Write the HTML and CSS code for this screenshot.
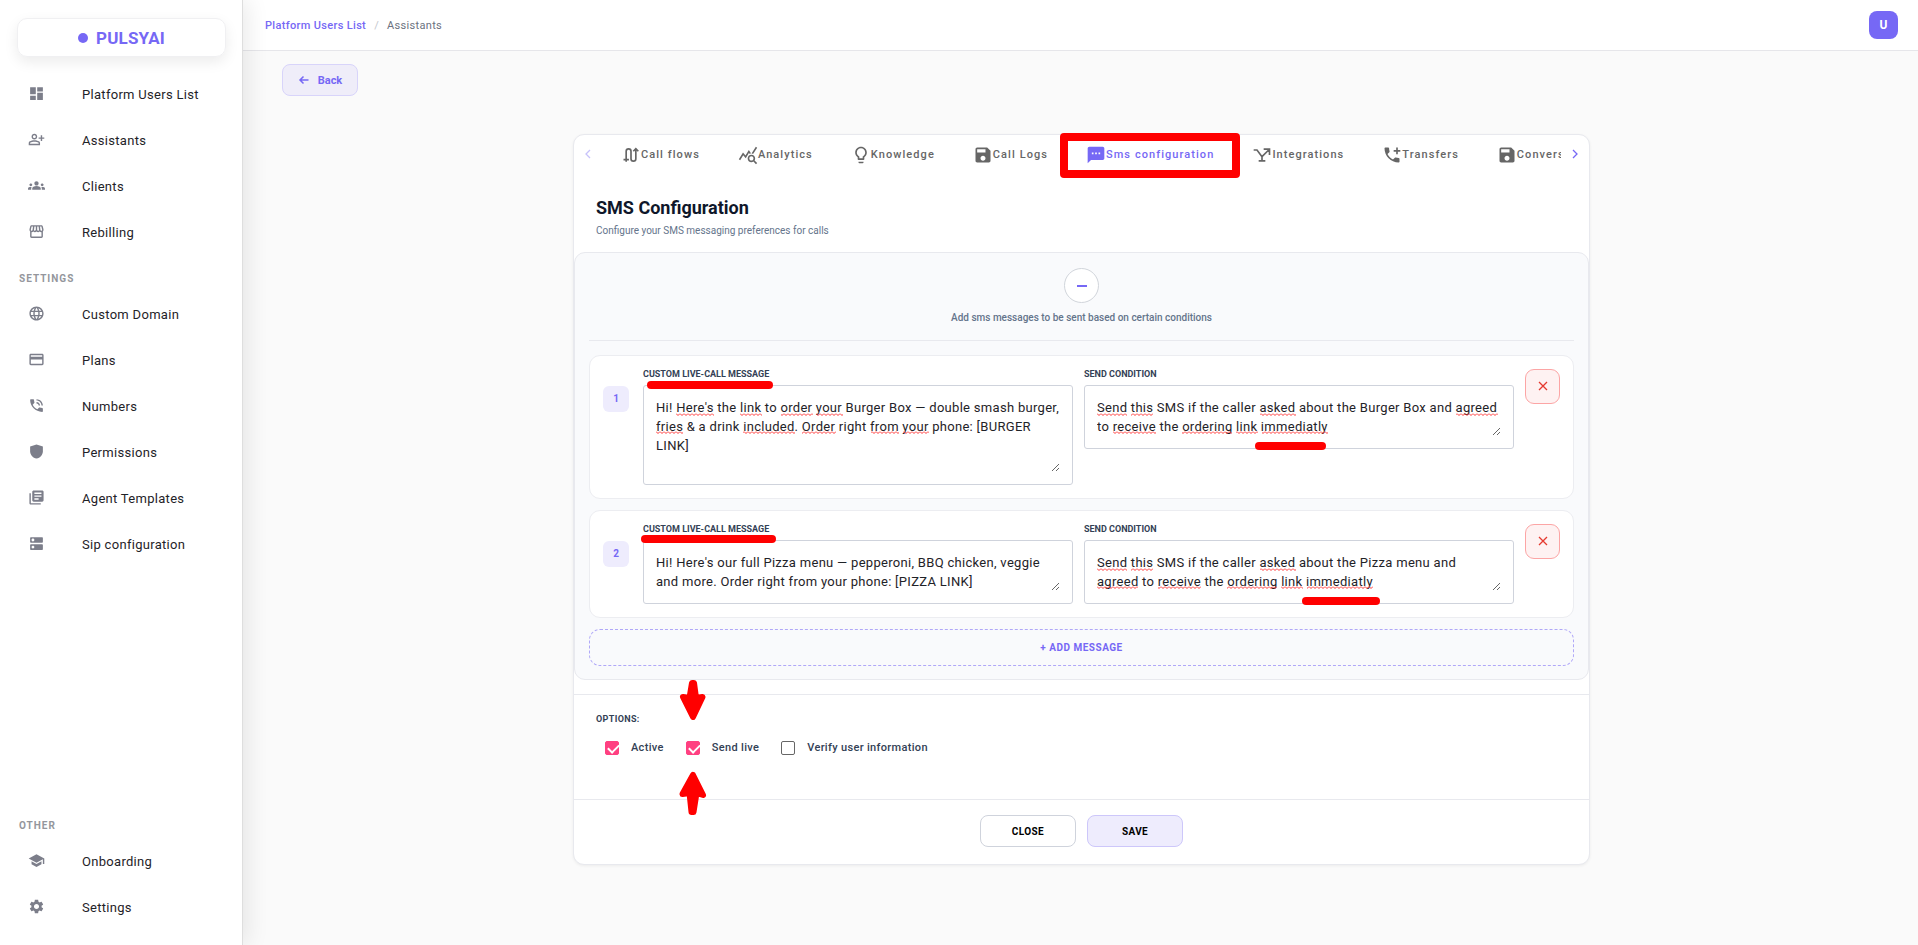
FILE: index.html
```html
<!DOCTYPE html>
<html lang="en">
<head>
  <meta charset="UTF-8" />
  <meta name="viewport" content="width=device-width, initial-scale=1.0" />
  <title>PulsyAI - SMS Configuration</title>
  <link rel="stylesheet" href="styles.css">
</head>
<body>
  <aside class="sidebar">
    <div class="logo"><span class="logo-dot"></span>PULSYAI</div>
    <nav class="nav">
      <a class="nav-item" href="#"><svg class="nav-icon" viewBox="0 0 24 24"><path d="M3 13h8V3H3v10zm0 8h8v-6H3v6zm10 0h8V11h-8v10zm0-18v6h8V3h-8z"/></svg>Platform Users List</a>
      <a class="nav-item" href="#"><svg class="nav-icon" viewBox="0 0 24 24"><path d="M20 9V6h-2v3h-3v2h3v3h2v-3h3V9h-3zM9 12c2.21 0 4-1.79 4-4s-1.79-4-4-4-4 1.79-4 4 1.79 4 4 4zm0-6c1.1 0 2 .9 2 2s-.9 2-2 2-2-.9-2-2 .9-2 2-2zm6.39 8.56C13.71 13.7 11.53 13 9 13s-4.71.7-6.39 1.56C1.61 15.07 1 16.1 1 17.22V20h16v-2.78c0-1.12-.61-2.15-1.61-2.66zM15 18H3v-.78c0-.38.2-.72.52-.88C4.71 15.73 6.63 15 9 15c2.37 0 4.29.73 5.48 1.34.32.16.52.5.52.88V18z"/></svg>Assistants</a>
      <a class="nav-item" href="#"><svg class="nav-icon" viewBox="0 0 24 24"><path d="M12 12.75c1.63 0 3.07.39 4.24.9 1.08.48 1.76 1.56 1.76 2.73V18H6v-1.61c0-1.18.68-2.26 1.76-2.73 1.17-.52 2.61-.91 4.24-.91zM4 13c1.1 0 2-.9 2-2s-.9-2-2-2-2 .9-2 2 .9 2 2 2zm1.13 1.1c-.37-.06-.74-.1-1.13-.1-.99 0-1.93.21-2.78.58C.48 14.9 0 15.62 0 16.43V18h4.5v-1.61c0-.83.23-1.61.63-2.29zM20 13c1.1 0 2-.9 2-2s-.9-2-2-2-2 .9-2 2 .9 2 2 2zm4 3.43c0-.81-.48-1.53-1.22-1.85-.85-.37-1.79-.58-2.78-.58-.39 0-.76.04-1.13.1.4.68.63 1.46.63 2.29V18H24v-1.57zM12 6c1.66 0 3 1.34 3 3s-1.34 3-3 3-3-1.34-3-3 1.34-3 3-3z"/></svg>Clients</a>
      <a class="nav-item" href="#"><svg class="nav-icon" viewBox="0 0 24 24"><path d="M21.9 8.89l-1.05-4.37c-.22-.9-1-1.52-1.91-1.52H5.05c-.9 0-1.69.63-1.9 1.52L2.1 8.89c-.24 1.02-.02 2.06.62 2.88.08.11.19.19.28.29V19c0 1.1.9 2 2 2h14c1.1 0 2-.9 2-2v-6.94c.09-.09.2-.18.28-.28.64-.82.87-1.87.62-2.89zm-2.99-3.9l1.05 4.37c.1.42.01.84-.25 1.17-.14.18-.44.47-.94.47-.61 0-1.14-.49-1.21-1.14L16.98 5l1.93-.01zM13 5h1.96l.54 4.52c.05.39-.07.78-.33 1.07-.22.26-.54.41-.95.41-.67 0-1.22-.59-1.22-1.31V5zM8.49 9.52L9.04 5H11v4.69c0 .72-.55 1.31-1.29 1.31-.34 0-.65-.15-.89-.41-.25-.29-.37-.68-.33-1.07zm-4.45-.16L5.05 5h1.97l-.58 4.86c-.08.65-.6 1.14-1.21 1.14-.49 0-.8-.29-.93-.47-.27-.32-.36-.75-.26-1.17zM5 19v-6.03c.08.01.15.03.23.03.87 0 1.66-.36 2.24-.95.6.6 1.4.95 2.31.95.87 0 1.65-.36 2.23-.93.59.57 1.39.93 2.29.93.84 0 1.64-.35 2.24-.95.58.59 1.37.95 2.24.95.08 0 .15-.02.23-.03V19H5z"/></svg>Rebilling</a>
      <div class="nav-label">SETTINGS</div>
      <a class="nav-item" href="#"><svg class="nav-icon" viewBox="0 0 24 24"><path d="M11.99 2C6.47 2 2 6.48 2 12s4.47 10 9.99 10C17.52 22 22 17.52 22 12S17.52 2 11.99 2zm6.93 6h-2.95c-.32-1.25-.78-2.45-1.38-3.56 1.84.63 3.37 1.91 4.33 3.56zM12 4.04c.83 1.2 1.48 2.53 1.91 3.96h-3.82c.43-1.43 1.08-2.76 1.91-3.96zM4.26 14C4.1 13.36 4 12.69 4 12s.1-1.36.26-2h3.38c-.08.66-.14 1.32-.14 2 0 .68.06 1.34.14 2H4.26zm.82 2h2.95c.32 1.25.78 2.45 1.38 3.56-1.84-.63-3.37-1.9-4.33-3.56zm2.95-8H5.08c.96-1.66 2.49-2.93 4.33-3.56C8.81 5.55 8.35 6.75 8.03 8zM12 19.96c-.83-1.2-1.48-2.53-1.91-3.96h3.82c-.43 1.43-1.08 2.76-1.91 3.96zM14.34 14H9.66c-.09-.66-.16-1.32-.16-2 0-.68.07-1.35.16-2h4.68c.09.65.16 1.32.16 2 0 .68-.07 1.34-.16 2zm.25 5.56c.6-1.11 1.06-2.31 1.38-3.56h2.95c-.96 1.65-2.49 2.93-4.33 3.56zM16.36 14c.08-.66.14-1.32.14-2 0-.68-.06-1.34-.14-2h3.38c.16.64.26 1.31.26 2s-.1 1.36-.26 2h-3.38z"/></svg>Custom Domain</a>
      <a class="nav-item" href="#"><svg class="nav-icon" viewBox="0 0 24 24"><path d="M20 4H4c-1.11 0-1.99.89-1.99 2L2 18c0 1.11.89 2 2 2h16c1.11 0 2-.89 2-2V6c0-1.11-.89-2-2-2zm0 14H4v-6h16v6zm0-10H4V6h16v2z"/></svg>Plans</a>
      <a class="nav-item" href="#"><svg class="nav-icon" viewBox="0 0 24 24"><path d="M20 15.5c-1.25 0-2.45-.2-3.57-.57-.35-.11-.74-.03-1.02.24l-2.2 2.2c-2.83-1.44-5.15-3.75-6.59-6.59l2.2-2.21c.28-.26.36-.65.25-1C8.7 6.45 8.5 5.25 8.5 4c0-.55-.45-1-1-1H4c-.55 0-1 .45-1 1 0 9.39 7.61 17 17 17 .55 0 1-.45 1-1v-3.5c0-.55-.45-1-1-1zM19 12h2c0-4.97-4.03-9-9-9v2c3.87 0 7 3.13 7 7zm-4 0h2c0-2.76-2.24-5-5-5v2c1.66 0 3 1.34 3 3z"/></svg>Numbers</a>
      <a class="nav-item" href="#"><svg class="nav-icon" viewBox="0 0 24 24"><path d="M12 2L3 5v6.500c0 5 3.840 9.300 9 10.500 5.160-1.200 9-5.500 9-10.500V5l-9-3z"/></svg>Permissions</a>
      <a class="nav-item" href="#"><svg class="nav-icon" viewBox="0 0 24 24"><path d="M4 6H2v14c0 1.100.9 2 2 2h14v-2H4V6zm16-4H8c-1.100 0-2 .9-2 2v12c0 1.100.9 2 2 2h12c1.100 0 2-.9 2-2V4c0-1.100-.9-2-2-2zm-1 9H9V9h10v2zm-4 4H9v-2h6v2zm4-8H9V5h10v2z"/></svg>Agent Templates</a>
      <a class="nav-item" href="#"><svg class="nav-icon" viewBox="0 0 24 24"><path d="M20 13H4c-.55 0-1 .45-1 1v6c0 .55.45 1 1 1h16c.55 0 1-.45 1-1v-6c0-.55-.45-1-1-1zM7 19c-1.100 0-2-.9-2-2s.9-2 2-2 2 .9 2 2-.9 2-2 2zM20 3H4c-.55 0-1 .45-1 1v6c0 .55.45 1 1 1h16c.55 0 1-.45 1-1V4c0-.55-.45-1-1-1zM7 9c-1.100 0-2-.9-2-2s.9-2 2-2 2 .9 2 2-.9 2-2 2z"/></svg>Sip configuration</a>
    </nav>
    <nav class="nav nav-bottom">
      <div class="nav-label">OTHER</div>
      <a class="nav-item" href="#"><svg class="nav-icon" viewBox="0 0 24 24"><path d="M5 13.180v4L12 21l7-3.820v-4L12 17l-7-3.820zM12 3L1 9l11 6 9-4.910V17h2V9L12 3z"/></svg>Onboarding</a>
      <a class="nav-item" href="#"><svg class="nav-icon" viewBox="0 0 24 24"><path d="M19.140 12.940c.04-.3.060-.61.060-.94 0-.32-.02-.64-.07-.94l2.030-1.580c.18-.14.230-.41.120-.61l-1.920-3.320c-.12-.22-.37-.29-.59-.22l-2.390.96c-.5-.38-1.030-.7-1.620-.94l-.36-2.540c-.04-.24-.24-.41-.48-.41h-3.840c-.24 0-.43.170-.47.410l-.36 2.540c-.59.240-1.130.570-1.620.940l-2.390-.96c-.22-.08-.47 0-.59.220L2.740 8.870c-.12.210-.08.470.120.610l2.030 1.580c-.05.300-.09.630-.09.940s.02.640.070.940l-2.030 1.580c-.18.140-.23.410-.12.610l1.920 3.320c.12.220.37.290.59.220l2.390-.96c.5.380 1.030.7 1.620.940l.36 2.540c.05.240.24.410.48.410h3.840c.24 0 .44-.17.470-.41l.36-2.540c.59-.24 1.130-.56 1.620-.94l2.390.96c.22.080.47 0 .59-.22l1.920-3.320c.12-.22.070-.47-.12-.61l-2.010-1.580zM12 15.600c-1.980 0-3.600-1.620-3.600-3.600s1.620-3.600 3.600-3.600 3.600 1.620 3.600 3.600-1.620 3.600-3.600 3.600z"/></svg>Settings</a>
    </nav>
  </aside>

  <div class="page">
    <header class="topbar">
      <nav class="breadcrumb">
        <a class="crumb-link" href="#">Platform Users List</a>
        <span class="crumb-sep">/</span>
        <span>Assistants</span>
      </nav>
      <button class="avatar" type="button">U</button>
    </header>

    <main class="content">
      <button class="back-btn" type="button"><svg class="back-icon" viewBox="0 0 24 24"><path d="M21 12H4M11 5l-7 7 7 7"/></svg>Back</button>

      <section class="card">
        <div class="tabs">
          <button class="tabs-arrow faded" type="button" aria-label="Previous tabs"><svg viewBox="0 0 6 10"><path d="M5 1L1 5l4 4"/></svg></button>
          <div class="tab-list">
            <button class="tab" type="button"><svg class="tab-icon" viewBox="0 0 24 24"><path class="line" d="M3 17.500h6.500M6.200 20V7.500a2.900 2.900 0 0 1 5.800 0v9a2.900 2.900 0 0 0 5.800 0V5M14.800 7.500l3-3 3 3"/></svg>Call flows</button>
            <button class="tab" type="button"><svg class="tab-icon" viewBox="0 0 24 24"><path d="M19.880 18.470c.44-.7.7-1.510.7-2.390 0-2.490-2.010-4.500-4.500-4.500s-4.500 2.010-4.500 4.500 2.010 4.500 4.490 4.500c.88 0 1.700-.26 2.390-.7L21.580 23 23 21.580l-3.120-3.110zm-3.800.110c-1.380 0-2.500-1.120-2.500-2.500s1.120-2.500 2.500-2.500 2.500 1.120 2.500 2.500-1.120 2.500-2.500 2.500zm-.36-8.500c-.74.020-1.450.180-2.100.450l-.55-.83-3.800 6.180-3.010-3.520-3.630 5.810L1 17l5-8 3 3.500L13 6l2.720 4.080zm2.590.5c-.64-.28-1.330-.45-2.050-.49L21.380 2 23 3.180l-4.690 7.400z"/></svg>Analytics</button>
            <button class="tab" type="button"><svg class="tab-icon" viewBox="0 0 24 24"><path d="M9 21c0 .55.45 1 1 1h4c.55 0 1-.45 1-1v-1H9v1zm3-19C8.140 2 5 5.140 5 9c0 2.380 1.190 4.470 3 5.740V17c0 .55.45 1 1 1h6c.55 0 1-.45 1-1v-2.260c1.810-1.270 3-3.360 3-5.740 0-3.860-3.140-7-7-7zm2.850 11.100l-.85.600V16h-4v-2.300l-.85-.6C7.800 12.160 7 10.630 7 9c0-2.760 2.240-5 5-5s5 2.240 5 5c0 1.630-.8 3.160-2.150 4.100z"/></svg>Knowledge</button>
            <button class="tab" type="button"><svg class="tab-icon" viewBox="0 0 24 24"><path d="M17 3H5c-1.110 0-2 .9-2 2v14c0 1.100.89 2 2 2h14c1.100 0 2-.9 2-2V7l-4-4zm-5 16c-1.660 0-3-1.340-3-3s1.340-3 3-3 3 1.340 3 3-1.340 3-3 3zm3-10H5V5h10v4z"/></svg>Call Logs</button>
            <button class="tab active" type="button"><svg class="tab-icon" viewBox="0 0 24 24"><path d="M20 2H4c-1.100 0-1.990.9-1.990 2L2 22l4-4h14c1.100 0 2-.9 2-2V4c0-1.100-.9-2-2-2zM9 11H7V9h2v2zm4 0h-2V9h2v2zm4 0h-2V9h2v2z"/></svg>Sms configuration</button>
            <button class="tab" type="button"><svg class="tab-icon" viewBox="0 0 24 24"><path class="line" d="M2 6h4l6 8M12 14l8-8M14 5h7v7M12 13v6M8 19h8"/></svg>Integrations</button>
            <button class="tab" type="button"><svg class="tab-icon" viewBox="0 0 24 24"><path d="M20 15.500c-1.250 0-2.450-.2-3.570-.57-.1-.03-.21-.05-.31-.05-.26 0-.51.1-.71.290l-2.200 2.200c-2.830-1.440-5.150-3.750-6.590-6.590l2.200-2.210c.28-.26.360-.65.250-1C8.700 6.450 8.500 5.250 8.500 4c0-.55-.45-1-1-1H4c-.55 0-1 .45-1 1 0 9.390 7.610 17 17 17 .55 0 1-.45 1-1v-3.500c0-.55-.45-1-1-1zM22 6h-3V3h-2v3h-3v2h3v3h2V8h3z"/></svg>Transfers</button>
            <button class="tab" type="button"><svg class="tab-icon" viewBox="0 0 24 24"><path d="M17 3H5c-1.110 0-2 .9-2 2v14c0 1.100.89 2 2 2h14c1.100 0 2-.9 2-2V7l-4-4zm-5 16c-1.660 0-3-1.340-3-3s1.340-3 3-3 3 1.340 3 3-1.340 3-3 3zm3-10H5V5h10v4z"/></svg>Conversations</button>
          </div>
          <button class="tabs-arrow" type="button" aria-label="Next tabs"><svg viewBox="0 0 6 10"><path d="M1 1l4 4-4 4"/></svg></button>
        </div>

        <div class="card-head">
          <h1>SMS Configuration</h1>
          <p>Configure your SMS messaging preferences for calls</p>
        </div>

        <div class="panel">
          <div class="panel-head">
            <button class="toggle-btn" type="button" aria-label="Collapse"></button>
            <p>Add sms messages to be sent based on certain conditions</p>
          </div>

          <div class="message">
            <span class="badge">1</span>
            <div class="field">
              <label for="msg1">CUSTOM LIVE-CALL MESSAGE</label>
              <div class="box">
                <textarea class="tall" id="msg1" spellcheck="false">Hi! Here's the link to order your Burger Box — double smash burger, fries &amp; a drink included. Order right from your phone: [BURGER LINK]</textarea>
                <svg class="spell">
                  <defs><pattern id="wave" width="4" height="3" patternUnits="userSpaceOnUse"><path d="M0 .5l2 2 2-2" fill="none" stroke="#f33"/></pattern></defs>
                  <rect x="20" y="15" width="38" height="3"/><rect x="84" y="15" width="22" height="3"/><rect x="125" y="15" width="32" height="3"/><rect x="160" y="15" width="27" height="3"/>
                  <rect x="0" y="33" width="27" height="3"/><rect x="87" y="33" width="52" height="3"/><rect x="146" y="33" width="34" height="3"/><rect x="215" y="33" width="28" height="3"/><rect x="247" y="33" width="26" height="3"/>
                </svg>
              </div>
            </div>
            <div class="field">
              <label for="cond1">SEND CONDITION</label>
              <div class="box">
                <textarea id="cond1" spellcheck="false">Send this SMS if the caller asked about the Burger Box and agreed to receive the ordering link immediatly</textarea>
                <svg class="spell">
                  <rect x="0" y="15" width="30" height="3"/><rect x="34" y="15" width="22" height="3"/><rect x="163" y="15" width="36" height="3"/><rect x="359" y="15" width="42" height="3"/>
                  <rect x="16" y="33" width="43" height="3"/><rect x="85" y="33" width="50" height="3"/><rect x="139" y="33" width="22" height="3"/><rect x="165" y="33" width="66" height="3"/>
                </svg>
              </div>
            </div>
            <button class="delete-btn" type="button" aria-label="Remove message 1"><svg viewBox="0 0 10 10"><path d="M1 1l8 8M9 1L1 9"/></svg></button>
          </div>

          <div class="message">
            <span class="badge">2</span>
            <div class="field">
              <label for="msg2">CUSTOM LIVE-CALL MESSAGE</label>
              <div class="box">
                <textarea id="msg2" spellcheck="false">Hi! Here's our full Pizza menu — pepperoni, BBQ chicken, veggie and more. Order right from your phone: [PIZZA LINK]</textarea>
              </div>
            </div>
            <div class="field">
              <label for="cond2">SEND CONDITION</label>
              <div class="box">
                <textarea id="cond2" spellcheck="false">Send this SMS if the caller asked about the Pizza menu and agreed to receive the ordering link immediatly</textarea>
                <svg class="spell">
                  <rect x="0" y="15" width="30" height="3"/><rect x="34" y="15" width="22" height="3"/><rect x="163" y="15" width="36" height="3"/>
                  <rect x="0" y="33" width="41" height="3"/><rect x="61" y="33" width="43" height="3"/><rect x="130" y="33" width="50" height="3"/><rect x="184" y="33" width="22" height="3"/><rect x="210" y="33" width="66" height="3"/>
                </svg>
              </div>
            </div>
            <button class="delete-btn" type="button" aria-label="Remove message 2"><svg viewBox="0 0 10 10"><path d="M1 1l8 8M9 1L1 9"/></svg></button>
          </div>

          <button class="add-btn" type="button">+ ADD MESSAGE</button>
        </div>

        <div class="options">
          <h2>OPTIONS:</h2>
          <div class="checks">
            <label class="check"><input type="checkbox" checked>Active</label>
            <label class="check"><input type="checkbox" checked>Send live</label>
            <label class="check"><input type="checkbox">Verify user information</label>
          </div>
        </div>

        <div class="card-foot">
          <button class="btn" type="button">CLOSE</button>
          <button class="btn btn-save" type="button">SAVE</button>
        </div>

        <!-- red marker highlights -->
        <svg class="marks" aria-hidden="true">
          <rect class="frame" x="490" y="2" width="172" height="37"/>
          <rect x="73" y="246" width="126" height="8" rx="4"/>
          <rect x="67" y="400" width="135" height="8" rx="4"/>
          <rect x="681" y="307" width="71" height="8" rx="4"/>
          <rect x="728" y="462" width="78" height="8" rx="4"/>
          <path class="arrow" d="M118 548h2l2 15 6.500-1L119 582l-10-20 6.500 1z"/>
          <path class="arrow" d="M119 640l10 20-6.500-2-3 19h-2l-2-19-7 1z"/>
        </svg>
      </section>
    </main>
  </div>
</body>
</html>
```

FILE: styles.css
```css
:root {
  --purple: #7668f5;
  --line: #e8e9ee;
  --text: #1f2328;
  --slate: #64748b;
  --dark: #334155;
  --red: #ff0000;
}
* { box-sizing: border-box; }
body {
  margin: 0;
  min-height: 100vh;
  display: flex;
  font-family: Roboto, "Liberation Sans", sans-serif;
  font-size: 13px;
  color: var(--text);
  background: #fafafa;
}
button {
  font-family: inherit;
  padding: 0;
  cursor: pointer;
}
a { text-decoration: none; color: inherit; }
h1, h2, p { margin: 0; }

/* sidebar */
.sidebar {
  position: relative;
  z-index: 1;
  width: 243px;
  flex: none;
  display: flex;
  flex-direction: column;
  padding: 18px 0 15px;
  background: #fff;
  border-right: 1px solid #dedede;
  box-shadow: 4px 0 22px rgba(0,0,0,0.09);
}
.logo {
  display: flex; align-items: center; justify-content: center;
  gap: 8px;
  height: 39px;
  margin: 0 16px 14px 17px;
  border: 1px solid #f0f0f2;
  border-radius: 10px;
  box-shadow: 0 5px 14px rgba(0,0,0,0.08);
  font-size: 17px; line-height: 20px; font-weight: 700;
  letter-spacing: .01em;
  color: var(--purple);
}
.logo-dot {
  width: 10px; height: 10px;
  border-radius: 50%;
  background: var(--purple);
}
.nav { display: flex; flex-direction: column; }
.nav-bottom { margin-top: auto; }
.nav-item {
  display: flex; align-items: center;
  gap: 37px;
  height: 46px;
  padding-left: 28px;
  letter-spacing: .023em;
}
.nav-icon {
  width: 17px; height: 17px;
  margin-bottom: 2px;
  fill: #7c7e8a;
}
.nav-label {
  height: 36px; line-height: 48px;
  padding-left: 19px;
  font-size: 10px; font-weight: 700;
  letter-spacing: .1em;
  color: #94969c;
}

/* top bar */
.page {
  flex: 1;
  min-width: 0;
}
.topbar {
  display: flex; align-items: center; justify-content: space-between;
  height: 51px;
  padding: 0 20px 0 22px;
  background: #fff;
  border-bottom: 1px solid #e6e6ea;
}
.breadcrumb {
  display: flex;
  gap: 8px;
  font-size: 11px;
  letter-spacing: .03em;
  color: #6b7280;
}
.crumb-link { color: var(--purple); font-weight: 500; }
.crumb-sep { color: #c4c7cd; }
.avatar {
  width: 29px; height: 28px;
  border: none; border-radius: 8px;
  background: var(--purple);
  color: #fff;
  font-size: 12px; font-weight: 700;
}

/* content */
.content { padding: 13px 37px 0 39px; }
.back-btn {
  display: flex; align-items: center; justify-content: center;
  gap: 8px;
  width: 76px; height: 32px;
  border: 1px solid #d8d4fa; border-radius: 8px;
  background: #efedf9;
  color: var(--purple);
  font-size: 11px; font-weight: 700;
}
.back-icon {
  width: 12px; height: 12px;
  fill: none; stroke: var(--purple); stroke-width: 3;
}
.card {
  position: relative;
  max-width: 1017px;
  margin: 38px auto 0;
  background: #fff;
  border: 1px solid var(--line);
  border-radius: 11px;
  box-shadow: 0 1px 3px rgba(0,0,0,0.06);
}

/* tabs */
.tabs {
  display: flex;
  height: 39px;
}
.tabs-arrow {
  flex: none;
  width: 28px;
  border: none;
  background: none;
}
.tabs-arrow svg {
  width: 6px; height: 10px;
  fill: none; stroke: var(--purple); stroke-width: 1.3;
}
.faded { opacity: .4; }
.tab-list {
  display: flex;
  flex: 1;
  overflow: hidden;
}
.tab {
  display: flex; align-items: center;
  flex: none;
  padding: 0 19px;
  border: none;
  background: none;
  color: #666;
  font-size: 11px; font-weight: 500;
  letter-spacing: .097em;
}
.tab.active { color: var(--purple); }
.tab-icon {
  width: 20px; height: 20px;
  fill: currentColor;
}
.tab-icon .line { fill: none; stroke: currentColor; stroke-width: 2; }

.card-head {
  padding: 22px 22px 14px;
}
.card-head h1 {
  font-size: 18px; line-height: 24px;
  color: #0f172a;
}
.card-head p {
  margin-top: 4px;
  font-size: 10px; line-height: 14px;
  color: var(--slate);
}

/* messages panel */
.panel {
  display: flex; flex-direction: column;
  gap: 11px;
  padding: 15px 14px 13px;
  background: #f9fafc;
  border: 1px solid var(--line);
  border-radius: 11px;
}
.panel-head {
  display: flex; flex-direction: column; align-items: center;
  gap: 8px;
  padding-bottom: 15px;
  margin-bottom: 3px;
  border-bottom: 1px solid var(--line);
  font-size: 10px; line-height: 14px; font-weight: 500;
  color: var(--slate);
}
.toggle-btn {
  display: flex; align-items: center; justify-content: center;
  width: 35px; height: 35px;
  border: 1px solid #d1d5db; border-radius: 50%;
  background: #fff;
}
.toggle-btn::before {
  content: "";
  width: 10px; height: 2px;
  background: var(--purple);
}
.message {
  display: flex; align-items: flex-start;
  gap: 11px;
  padding: 13px;
  background: #fff;
  border: 1px solid #ecedf1;
  border-radius: 11px;
}
.badge {
  flex: none;
  width: 26px; height: 26px;
  margin: 17px 3px 0 0;
  border-radius: 6px;
  background: #eeecfd;
  color: var(--purple);
  font-size: 10px; line-height: 26px; font-weight: 700;
  text-align: center;
}
.field { flex: 1; min-width: 0; }
.field label {
  display: block;
  margin-bottom: 6px;
  font-size: 9px; line-height: 10px; font-weight: 700;
  color: var(--dark);
}
.box {
  position: relative;
  padding: 12px;
  border: 1px solid #cfd3dc;
  border-radius: 3px;
}
.box textarea {
  display: block;
  width: 100%; height: 38px;
  padding: 0;
  border: none; outline: none;
  resize: vertical;
  overflow: hidden;
  background: none;
  font-family: inherit;
  font-size: 13px; line-height: 19px;
  letter-spacing: .023em;
  color: var(--text);
}
.box textarea.tall { height: 74px; }
/* spell-check underlines */
.spell {
  position: absolute;
  left: 12px; top: 12px;
  width: 404px; height: 38px;
  pointer-events: none;
  fill: url(#wave);
}
.delete-btn {
  flex: none;
  width: 35px; height: 35px;
  border: 1px solid #fca5a5; border-radius: 9px;
  background: #fef2f2;
}
.delete-btn svg {
  width: 10px; height: 10px;
  fill: none; stroke: #e5392f; stroke-width: 1.3;
}
.add-btn {
  height: 37px;
  border: 1px dashed #b0a8f8; border-radius: 11px;
  background: none;
  color: var(--purple);
  font-size: 10px; font-weight: 700;
  letter-spacing: .05em;
}

/* options */
.options {
  margin-top: 14px;
  padding: 17px 22px 0;
  height: 105px;
  border-top: 1px solid var(--line);
}
.options h2 {
  font-size: 9px; line-height: 14px;
  letter-spacing: .04em;
  color: var(--dark);
}
.checks {
  display: flex;
  gap: 22px;
  padding: 13px 9px 0;
}
.check {
  display: flex; align-items: center;
  gap: 12px;
  font-size: 11px; line-height: 18px; font-weight: 500;
  letter-spacing: .03em;
  color: var(--dark);
}
.check input {
  appearance: none;
  position: relative;
  width: 14px; height: 14px;
  margin: 0;
  border: 1px solid #666; border-radius: 2px;
  background: #fff;
}
.check input:checked {
  background: #ff4081;
  border-color: #ff4081;
}
.check input:checked::after {
  content: "";
  position: absolute;
  left: 4px; top: 0;
  width: 5px; height: 9px;
  border: solid #fff;
  border-width: 0 2px 2px 0;
  transform: rotate(45deg);
}

.card-foot {
  display: flex; justify-content: center;
  gap: 11px;
  padding: 15px 0 17px;
  border-top: 1px solid var(--line);
}
.btn {
  width: 96px; height: 32px;
  border: 1px solid #cfd3dc; border-radius: 8px;
  background: #fff;
  color: #000;
  font-size: 10px; font-weight: 700;
  letter-spacing: .04em;
}
.btn-save {
  background: #eeecfd;
  border-color: #cdc7fa;
}

.marks {
  position: absolute;
  left: 0; top: 0;
  width: 100%; height: 100%;
  overflow: visible;
  pointer-events: none;
  fill: var(--red);
}
.marks .frame { fill: none; stroke: var(--red); stroke-width: 8; stroke-linejoin: round; }
.marks .arrow { stroke: var(--red); stroke-width: 6; stroke-linejoin: round; }
```
